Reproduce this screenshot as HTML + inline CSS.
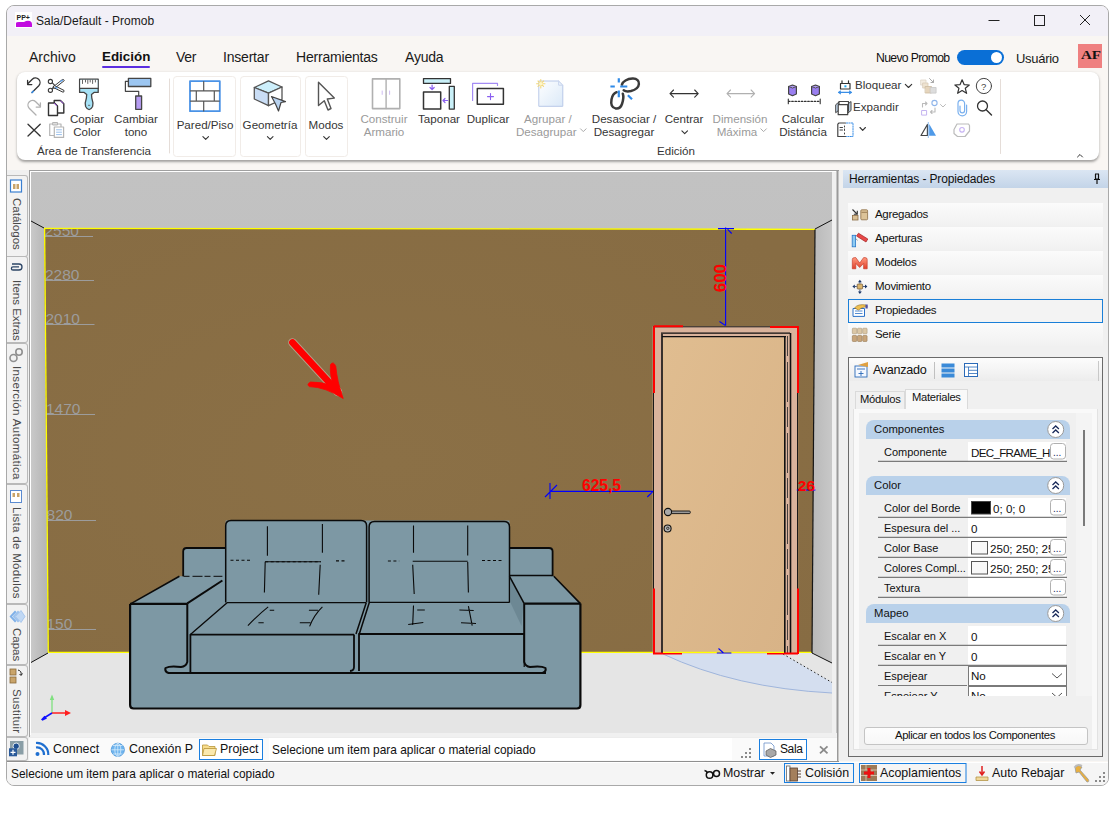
<!DOCTYPE html>
<html><head><meta charset="utf-8">
<style>
*{box-sizing:border-box;margin:0;padding:0}
html,body{width:1116px;height:830px;overflow:hidden;background:#fff;font-family:"Liberation Sans",sans-serif;color:#1a1a1a}
.a{position:absolute;white-space:nowrap}
#win{position:absolute;left:6px;top:5px;width:1103px;height:781px;border:1px solid #a9a9a9;border-radius:8px;background:#f9f6f3;overflow:hidden}
#title{position:absolute;left:0;top:0;width:1101px;height:30px;background:#f2f0f7}
.rl{font-size:11.6px;color:#363636;text-align:center;line-height:13px}
.dis{color:#9a9a9a}
.tabv{position:absolute;left:7px;width:21px;background:#f2f2f2;border:1px solid #b9b9b9;border-left:none;border-radius:0 3px 3px 0}
.vt{position:absolute;left:11px;writing-mode:vertical-rl;font-size:11.5px;color:#4a4a4a;line-height:12px}
.pi{position:absolute;left:848px;width:255px;height:23px;background:linear-gradient(#fbfbfb,#f1f1f1);font-size:11.5px;color:#111}
.pi span{position:absolute;left:27px;top:5px;letter-spacing:-0.3px}
.pg{font-size:11px;color:#111}
</style></head><body>
<div id="win">
  <div id="title"></div>
</div>
<!-- title bar -->
<svg class="a" style="left:15px;top:12px" width="18" height="16" viewBox="0 0 18 16">
  <rect x="0" y="0" width="17" height="16" fill="#fff"/>
  <text x="1.5" y="8" font-size="7" font-weight="bold" font-family="Liberation Sans" fill="#222">PP+</text>
  <path d="M1 11 Q1 10 4 10 L9 10 Q12 8 15 9 Q17 10 17 12 L17 15 L1 15 Z" fill="#c20ce0"/>
</svg>
<div class="a" style="left:36px;top:14px;font-size:12px;color:#1a1a1a">Sala/Default - Promob</div>
<!-- window controls -->
<svg class="a" style="left:980px;top:12px" width="120" height="16" viewBox="0 0 120 16">
  <line x1="8.5" y1="8.5" x2="19.5" y2="8.5" stroke="#222" stroke-width="1"/>
  <rect x="54.5" y="3.5" width="10" height="10" fill="none" stroke="#222" stroke-width="1"/>
  <path d="M100 3 L110 13 M110 3 L100 13" stroke="#222" stroke-width="1"/>
</svg>
<!-- menu -->
<div class="a" style="left:29px;top:49px;font-size:14px;color:#1a1a1a">Archivo</div>
<div class="a" style="left:102px;top:49px;font-size:13.4px;font-weight:bold;color:#111">Edición</div>
<div class="a" style="left:102px;top:66px;width:48px;height:2px;background:#5b2ee0;border-radius:1px"></div>
<div class="a" style="left:176px;top:49px;font-size:14px;letter-spacing:-0.3px">Ver</div>
<div class="a" style="left:223px;top:49px;font-size:14px;letter-spacing:-0.2px">Insertar</div>
<div class="a" style="left:296px;top:49px;font-size:14px;letter-spacing:-0.2px">Herramientas</div>
<div class="a" style="left:405px;top:49px;font-size:14px;letter-spacing:-0.2px">Ayuda</div>
<div class="a" style="left:876px;top:51px;font-size:12.2px;letter-spacing:-0.65px;color:#111">Nuevo Promob</div>
<div class="a" style="left:957px;top:50px;width:47px;height:15px;background:#0a6fd6;border-radius:8px"></div>
<div class="a" style="left:991px;top:52px;width:11px;height:11px;background:#fff;border-radius:50%"></div>
<div class="a" style="left:1016px;top:50.5px;font-size:13px;letter-spacing:-0.3px;color:#1a1a1a">Usuário</div>
<div class="a" style="left:1078px;top:44px;width:24px;height:24px;background:#ef8080"></div>
<div class="a" style="left:1080.5px;top:48px;font-family:'Liberation Serif',serif;font-weight:bold;font-size:12px;color:#111;transform:scaleX(1.25);transform-origin:0 0">AF</div>
<!-- ribbon panel -->
<div class="a" style="left:17px;top:72px;width:1082px;height:88px;background:#fff;border-radius:8px;box-shadow:0 1.5px 2.5px rgba(0,0,0,0.35)"></div>
<svg class="a" style="left:0;top:0" width="1116" height="170" viewBox="0 0 1116 170" fill="none" stroke-linecap="round" stroke-linejoin="round">
 <!-- undo -->
 <path d="M32 92.5 L38.8 85.7 A4.6 4.6 0 0 0 32.3 79.2 L28 83.5" stroke="#333" stroke-width="1.3"/>
 <path d="M27.6 80.4 V84.6 H31.8" stroke="#333" stroke-width="1.3"/>
 <path d="M32 92.5 L33.3 91.2" stroke="#3a8ee6" stroke-width="1.6"/>
 <!-- scissors -->
 <circle cx="50.4" cy="81.5" r="2.1" stroke="#3a3a3a" stroke-width="1.1" fill="#fff"/>
 <circle cx="50.4" cy="90.3" r="2.1" stroke="#3a3a3a" stroke-width="1.1" fill="#fff"/>
 <path d="M52.3 82.8 L55 85.6 M52.3 89 L55 86.3" stroke="#3a3a3a" stroke-width="1.1"/>
 <path d="M53 87 L62.3 79.6 Q63.8 79 64.3 80.6 L55 88 Z" stroke="#3a3a3a" stroke-width="1" fill="#fff"/>
 <path d="M54.5 85.6 L64 90.4 Q64.5 92 63 92.2 L53.5 87.6 Z" stroke="#3a3a3a" stroke-width="1" fill="#fff"/>
 <path d="M60.5 81.6 L62.5 80.3 M55.5 87.3 L57 88.1" stroke="#5aa0ee" stroke-width="1.2"/>
 <!-- redo -->
 <path d="M36 115 L29.2 108.2 A4.6 4.6 0 0 1 35.7 101.7 L40 106" stroke="#b0b0b0" stroke-width="1.3"/>
 <path d="M40.4 102.9 V107.1 H36.2" stroke="#b0b0b0" stroke-width="1.3"/>
 <!-- copy -->
 <path d="M54.2 113 V100.5 H60.5 L63.8 103.8 V113 Z" stroke="#333" stroke-width="1.4" fill="#fff"/>
 <path d="M48.5 103 H54.5 L57.5 106 V115.5 H48.5 Z" stroke="#333" stroke-width="1.4" fill="#fff"/>
 <path d="M54.5 103.3 L56.5 105.5 M60.6 100.8 L63 103.3" stroke="#9b4fe0" stroke-width="1"/>
 <!-- delete X -->
 <path d="M28 124.2 L40.2 136 M40.2 124.2 L28 136" stroke="#333" stroke-width="1.3"/>
 <!-- paste gray -->
 <path d="M49.7 124 H61 V135.5 H49.7 Z" stroke="#b5b5b5" stroke-width="1.2" fill="#fff"/>
 <rect x="53" y="122.5" width="4.5" height="2.5" stroke="#b5b5b5" stroke-width="1" fill="#ddd"/>
 <path d="M54.3 127 H63.6 V137.4 H54.3 Z" stroke="#b5b5b5" stroke-width="1.2" fill="#fff"/>
 <path d="M56.5 129.8 H61.5 M56.5 132.2 H61.5 M56.5 134.6 H61.5" stroke="#9ac0ec" stroke-width="1"/>
 <!-- brush -->
 <path d="M79.6 79.2 H98.2 V92.4 H94 L91.5 94.5 L91.8 98 Q93.6 103 92.6 106.5 Q91 109.6 89.1 109.6 Q87.2 109.6 85.6 106.5 Q84.6 103 86.4 98 L86.7 94.5 L84.2 92.4 H79.6 Z" fill="#a6e2f6" stroke="#454545" stroke-width="1.3"/>
 <path d="M80.3 79.9 H97.5 V88.2 H80.3 Z" fill="#fff"/>
 <path d="M79.6 88.3 H98.2" stroke="#454545" stroke-width="1.2"/>
 <path d="M82.5 80 V83.5 M85.5 80 V82 M87.8 80 V83.5 M90.2 80 V82 M92.6 80 V83.5 M95.4 80 V82" stroke="#555" stroke-width="0.9"/>
 <path d="M88.4 105.3 H89.8" stroke="#555" stroke-width="0.8"/>
 <!-- roller -->
 <rect x="128.4" y="78.4" width="22.4" height="8.1" fill="#9cc6f1" stroke="#454545" stroke-width="1.3"/>
 <path d="M128.4 81.3 H125.4 V91.3 H138.7 V96" stroke="#454545" stroke-width="1.2"/>
 <rect x="135.7" y="96" width="5.9" height="13.3" fill="#b69cf2" stroke="#454545" stroke-width="1.3"/>
 <!-- separator -->
 <path d="M169.5 79 V153" stroke="#e5ddd8" stroke-width="1"/>
 <!-- button boxes -->
 <rect x="173.5" y="76.5" width="62" height="80" rx="3" stroke="#f1ece8" stroke-width="1"/>
 <rect x="240.5" y="76.5" width="60" height="80" rx="3" stroke="#f1ece8" stroke-width="1"/>
 <rect x="305.5" y="76.5" width="42" height="80" rx="3" stroke="#f1ece8" stroke-width="1"/>
 <!-- brick -->
 <rect x="190" y="81.2" width="29.8" height="30" stroke="#4a92e6" stroke-width="1.8"/>
 <path d="M190.5 90.9 H219.3 M190.5 101.1 H219.3 M203.7 81.5 V90.9 M196.3 90.9 V101.1 M214.3 90.9 V101.1 M203.7 101.1 V111" stroke="#555" stroke-width="1.2"/>
 <!-- cube -->
 <path d="M268.5 80.8 L282 87 L268.5 93.2 L254.3 87.5 Z" fill="#cdeffb" stroke="#555" stroke-width="1.3"/>
 <path d="M254.3 87.5 L268.5 93.2 V105.7 L254.3 99 Z" fill="#c9ddf5" stroke="#555" stroke-width="1.3"/>
 <path d="M268.5 93.2 L282 87 V99.5 L268.5 105.7 Z" fill="#fff" stroke="#555" stroke-width="1.3"/>
 <path d="M271.5 96.5 L285.5 101.6 L281 102.5 L278.5 111 L275.5 104 Z" fill="#b9d3f0" stroke="#444" stroke-width="1.2"/>
 <!-- pointer -->
 <path d="M318.5 82.2 L334.3 98.1 L327.3 99 L331 108.5 L328 110 L324.3 100.7 L318.5 105.5 Z" fill="#fff" stroke="#555" stroke-width="1.4"/>
 <!-- wardrobe -->
 <rect x="372.5" y="78.9" width="27.3" height="29.7" stroke="#b0b0b0" stroke-width="1.6"/>
 <path d="M386.1 79 V108.6" stroke="#b0b0b0" stroke-width="1.4"/>
 <path d="M382.2 91 V94.4 M389.6 91 V94.4" stroke="#c8b4f0" stroke-width="0.9"/>
 <!-- taponar -->
 <rect x="423.5" y="78.6" width="27" height="4.8" fill="#c9f0f8" stroke="#333" stroke-width="1.3"/>
 <path d="M432.1 85 V89.3 M430 87.5 L432.1 89.5 L434.2 87.5" stroke="#8a5ff0" stroke-width="1.2"/>
 <rect x="423.5" y="92.1" width="17.2" height="17" fill="#fff" stroke="#333" stroke-width="1.5"/>
 <rect x="449.3" y="86.4" width="5" height="22.7" fill="#c9f0f8" stroke="#333" stroke-width="1.3"/>
 <path d="M447.6 100.5 H443 M445 98.5 L443 100.5 L445 102.5" stroke="#8a5ff0" stroke-width="1.2"/>
 <!-- duplicar -->
 <path d="M472.6 100.5 V83.4 H497.5 V85.5" stroke="#a48cf4" stroke-width="1.2"/>
 <rect x="477.3" y="88.6" width="26.1" height="15.7" fill="#fff" stroke="#333" stroke-width="1.5"/>
 <path d="M490.5 93.6 V99.6 M487.5 96.6 H493.5" stroke="#8a5ff0" stroke-width="1.1"/>
 <!-- agrupar (disabled doc) -->
 <defs><linearGradient id="dg" x1="0" y1="0" x2="1" y2="1"><stop offset="0" stop-color="#fdfeff"/><stop offset="1" stop-color="#dbe9f8"/></linearGradient></defs>
 <path d="M539.2 81 H558.6 L562.8 85.2 V106.3 H539.2 Z" fill="url(#dg)" stroke="#b8c8e8" stroke-width="1"/>
 <path d="M558.6 81 V85.2 H562.8" stroke="#c9d6ee" stroke-width="1"/>
 <path d="M540.8 79.5 V88 M536.6 83.7 H545 M538 81 L543.6 86.4 M543.6 81 L538 86.4" stroke="#f2d77a" stroke-width="1.1"/>
 <circle cx="540.8" cy="83.7" r="1.8" fill="#fff6c8"/>
 <!-- desasociar -->
 <path d="M621.9 84.6 C622.8 81.5 627 78.8 632.6 78.6 C637 78.4 639.3 81 638.9 84 C638.6 87.6 636.5 89.6 631 91 C627.5 91.8 625 91.2 623.7 90.2" stroke="#3a3a3a" stroke-width="2.5"/>
 <path d="M616.6 92.2 C613.5 93.5 612 96.5 611.5 99.5 C610.8 103.5 611.5 107.5 615.5 108.4 C619 109 621 107 622 104 C623.2 100.5 623.8 96.5 622.8 93.7" stroke="#3a3a3a" stroke-width="2.5"/>
 <path d="M618.8 78.2 V82.6 M618.8 90.4 V97.3 M610.4 86.5 H614.8 M620.2 86.5 H627.3 M627.9 95.3 L632 99.3" stroke="#2f8ae8" stroke-width="2.2" stroke-linecap="butt"/>
 <!-- centrar -->
 <path d="M670 93.6 H698.2 M673.5 90 L670 93.6 L673.5 97.2 M694.7 90 L698.2 93.6 L694.7 97.2" stroke="#333" stroke-width="1.1"/>
 <!-- dimension disabled -->
 <path d="M727 93.6 H754.6 M730.5 90 L727 93.6 L730.5 97.2 M751.1 90 L754.6 93.6 L751.1 97.2" stroke="#b0b0b0" stroke-width="1.1"/>
 <!-- calcular -->
 <path d="M788.6 86.5 L792.5 85 L796.4 86.5 V94 L792.5 95.7 L788.6 94 Z" fill="#9a7ff0" stroke="#444" stroke-width="1.2"/>
 <path d="M788.6 86.5 L792.5 88 L796.4 86.5" stroke="#444" stroke-width="0.9" fill="#c9b8f8"/>
 <path d="M811.6 86.5 L815.5 85 L819.4 86.5 V94 L815.5 95.7 L811.6 94 Z" fill="#9a7ff0" stroke="#444" stroke-width="1.2"/>
 <path d="M811.6 86.5 L815.5 88 L819.4 86.5" stroke="#444" stroke-width="0.9" fill="#c9b8f8"/>
 <path d="M788.5 101.4 H820" stroke="#333" stroke-width="1.1" stroke-dasharray="1.6 1.6"/>
 <path d="M788.3 99 V103.8 M820.2 99 V103.8" stroke="#333" stroke-width="1.1"/>
 <!-- bloquear -->
 <path d="M840.5 83.5 H850 V89 H840.5 Z M842 83.5 V80.8 M848.5 83.5 V80.8" stroke="#333" stroke-width="1.2"/>
 <rect x="844.4" y="85.3" width="2" height="2" fill="#1fa8f0"/>
 <path d="M838.5 92.4 H851.5 M840.5 91 L838.5 92.4 L840.5 93.8 M849.5 91 L851.5 92.4 L849.5 93.8" stroke="#3a8ee6" stroke-width="1.1"/>
 <path d="M905.3 84.3 L908.5 87.5 L911.7 84.3" stroke="#333" stroke-width="1.1"/>
 <!-- expandir -->
 <path d="M836 104.5 L839 102 V110 L836 112.5 Z M848 104 L851 101.5 V110.5 L848 113 Z" fill="#c4d9ee" stroke="#444" stroke-width="1"/>
 <rect x="839" y="101.5" width="9.5" height="9.5" fill="#fff" stroke="#444" stroke-width="1.2"/>
 <rect x="838.2" y="104.7" width="9.5" height="10" fill="#fff" stroke="#444" stroke-width="1.2"/>
 <!-- row3 icon -->
 <path d="M845.5 123 H839 L837.8 124.2 V136.5 H845.5" stroke="#444" stroke-width="1.2"/>
 <path d="M840 127.5 H842.5 M840 130 H842.5 M844.5 126 V127 M844.5 129 V130.5 M844.5 133 V134" stroke="#444" stroke-width="1"/>
 <path d="M846.5 123 H853 V136.5 H846.5" stroke="#3a8ee6" stroke-width="1" stroke-dasharray="1.2 1.2"/>
 <path d="M860 127.5 L862.7 130.3 L865.4 127.5" stroke="#333" stroke-width="1.1"/>
 <!-- col2 disabled icons -->
 <rect x="921" y="80" width="5" height="5" fill="#f4ede2" stroke="#ddd4c6" stroke-width="0.8"/>
 <rect x="923" y="83" width="5" height="5" fill="#eee3d0" stroke="#d9ccb6" stroke-width="0.8"/>
 <rect x="925.5" y="86.5" width="6" height="6.5" fill="#e6d5bc" stroke="#cdbb9f" stroke-width="0.8"/>
 <rect x="930.5" y="87.5" width="5.6" height="5.6" fill="#ddd" stroke="#c8c8c8" stroke-width="0.8"/>
 <path d="M929.5 78.5 L933.5 82.5 M933.5 80 V82.5 H931" stroke="#aaa" stroke-width="1"/>
 <path d="M922.5 107 V103.5 H927 M925.5 102 L927 103.5 L925.5 105" stroke="#bbb" stroke-width="1.1"/>
 <circle cx="934.5" cy="103" r="2.6" stroke="#8fb5ea" stroke-width="1.1"/>
 <rect x="922" y="110.5" width="4.6" height="4.6" stroke="#c4b4f0" stroke-width="1"/>
 <path d="M935 108 V112 H930.5 M932 110.5 L930.5 112 L932 113.5" stroke="#bbb" stroke-width="1.1"/>
 <path d="M940.5 104.5 L943 107 L945.5 104.5" stroke="#bbb" stroke-width="1"/>
 <path d="M921 135.5 L927.4 124.5 V135.5 Z" stroke="#444" stroke-width="1.2"/>
 <path d="M929.2 124 L936 135.8 H929.2 Z" fill="#4f9ae8"/>
 <path d="M928.3 122.5 V137.5" stroke="#6aa8ee" stroke-width="0.8" stroke-dasharray="1 1"/>
 <!-- star -->
 <path d="M962.1 79.8 L964.1 84.6 L969.3 85 L965.3 88.3 L966.6 93.3 L962.1 90.6 L957.6 93.3 L958.9 88.3 L954.9 85 L960.1 84.6 Z" stroke="#333" stroke-width="1.2"/>
 <!-- help -->
 <circle cx="983.9" cy="86" r="7.6" stroke="#444" stroke-width="1"/>
 <text x="981" y="89.8" font-size="9.5" font-family="Liberation Sans" fill="#444" stroke="none">?</text>
 <!-- paperclip -->
 <path d="M960 106 V110.5 A2.3 2.3 0 0 0 964.6 110.5 V103.5 A3.3 3.3 0 0 0 958 103.5 V111.5 A4.3 4.3 0 0 0 966.6 111.5 V105" stroke="#7ab0ee" stroke-width="1.2"/>
 <!-- magnifier -->
 <circle cx="982.5" cy="106" r="5" stroke="#333" stroke-width="1.3"/>
 <path d="M986.2 109.7 L991.5 115" stroke="#333" stroke-width="1.4"/>
 <!-- shape -->
 <path d="M957 124 H968.5 L969.5 125.5 V131 L965 136.5 H957.5 L954 133.5 V129.5 Z" stroke="#bbb" stroke-width="1.2"/>
 <circle cx="962" cy="129.8" r="2.3" stroke="#c7b3f3" stroke-width="1.1"/>
 <!-- separator 2 -->
 <path d="M1000.5 79.5 V153.5" stroke="#e5ddd8" stroke-width="1"/>
 <!-- chevrons under buttons -->
 <path d="M202.9 136.6 L205.7 139.4 L208.5 136.6" stroke="#333" stroke-width="1.1"/>
 <path d="M267.4 136.6 L270.2 139.4 L273 136.6" stroke="#333" stroke-width="1.1"/>
 <path d="M323.7 136.6 L326.5 139.4 L329.3 136.6" stroke="#333" stroke-width="1.1"/>
 <path d="M681.9 130.8 L684.7 133.6 L687.5 130.8" stroke="#333" stroke-width="1.1"/>
 <path d="M580.5 128.8 L583.3 131.6 L586.1 128.8" stroke="#aaa" stroke-width="1"/>
 <path d="M760.8 128.8 L763.6 131.6 L766.4 128.8" stroke="#aaa" stroke-width="1"/>
 <path d="M1077.5 157 L1080 154.5 L1082.5 157" stroke="#333" stroke-width="1"/>
</svg>
<div class="a rl" style="left:37px;top:112px;width:100px">Copiar<br>Color</div>
<div class="a rl" style="left:86px;top:112px;width:100px">Cambiar<br>tono</div>
<div class="a rl" style="left:37px;top:144px;width:100px">Área de Transferencia</div>
<div class="a rl" style="left:155px;top:118px;width:100px">Pared/Piso</div>
<div class="a rl" style="left:220px;top:118px;width:100px">Geometría</div>
<div class="a rl" style="left:276px;top:118px;width:100px">Modos</div>
<div class="a rl dis" style="left:334px;top:112px;width:100px">Construir<br>Armario</div>
<div class="a rl" style="left:389px;top:112px;width:100px">Taponar</div>
<div class="a rl" style="left:438px;top:112px;width:100px">Duplicar</div>
<div class="a rl dis" style="left:495px;top:112px;width:100px;text-align:left;padding-left:29px">Agrupar /<br><span style="margin-left:-8px">Desagrupar</span></div>
<div class="a rl" style="left:574px;top:112px;width:100px">Desasociar /<br>Desagregar</div>
<div class="a rl" style="left:634px;top:112px;width:100px">Centrar</div>
<div class="a rl dis" style="left:690px;top:112px;width:100px">Dimensión<br><span style="margin-left:-6px">Máxima</span></div>
<div class="a rl" style="left:753px;top:112px;width:100px">Calcular<br>Distáncia</div>
<div class="a rl" style="left:626px;top:144px;width:100px">Edición</div>
<div class="a rl" style="left:855px;top:78px;text-align:left">Bloquear</div>
<div class="a rl" style="left:853px;top:100px;text-align:left">Expandir</div>


<!-- left vertical tabs -->
<div class="a" style="left:7px;top:170px;width:22px;height:591px;background:#f0f0f0"></div>
<div class="tabv" style="top:174.5px;height:82px"></div>
<div class="tabv" style="top:256px;height:87px"></div>
<div class="tabv" style="top:343px;height:141px"></div>
<div class="tabv" style="top:484px;height:120px"></div>
<div class="tabv" style="top:604px;height:61px"></div>
<div class="tabv" style="top:665px;height:72px"></div>
<div class="tabv" style="top:737px;height:24px"></div>
<div class="vt" style="top:198px">Catálogos</div>
<div class="vt" style="top:280px">Itens Extras</div>
<div class="vt" style="top:366px;letter-spacing:0.35px">Inserción Automática</div>
<div class="vt" style="top:507px;letter-spacing:0.3px">Lista de Módulos</div>
<div class="vt" style="top:628px">Capas</div>
<div class="vt" style="top:689px;letter-spacing:0.33px">Sustituir</div>
<svg class="a" style="left:0;top:160px" width="30" height="610" viewBox="0 160 30 610" fill="none">
 <!-- catalogos icon -->
 <rect x="10.5" y="180" width="11" height="12" fill="#fff" stroke="#3a7fd0" stroke-width="1.2"/>
 <rect x="13" y="184" width="2.5" height="5" fill="#c9a46a"/><rect x="16.5" y="184" width="2.5" height="5" fill="#c9a46a"/>
 <!-- clip -->
 <path d="M12 264 H19 A3 3 0 0 1 19 270 H13 A1.6 1.6 0 0 1 13 266.8 H19" stroke="#2c4566" stroke-width="1.3"/>
 <!-- insercion gears -->
 <circle cx="13.5" cy="358" r="3.5" stroke="#909090" stroke-width="1.6"/>
 <circle cx="19" cy="352" r="3.2" stroke="#909090" stroke-width="1.6"/>
 <!-- lista icon -->
 <rect x="10.5" y="490.5" width="11" height="12" fill="#fff" stroke="#5a8ad0" stroke-width="1"/>
 <rect x="12.5" y="493" width="2.5" height="4" fill="#c9a46a"/><rect x="17" y="493" width="2.5" height="4" fill="#c9a46a"/>
 <!-- capas -->
 <path d="M9.5 616.5 L15 610.5 L16.5 612 L12 616.5 L16.5 621 L15 622.5 Z" fill="#7fb0e8"/>
 <path d="M12.5 616.5 L18 610.5 L19.5 612 L15 616.5 L19.5 621 L18 622.5 Z" fill="#9cc2ee"/>
 <path d="M15.5 616.5 L21 610.5 L25 616.5 L21 622.5 Z" fill="#c0d8f4" stroke="#8ab4e8" stroke-width="0.6"/>
 <!-- sustituir -->
 <rect x="10" y="669" width="6" height="6" fill="#c9a46a" stroke="#8a6a3a" stroke-width="0.8"/>
 <rect x="10" y="677" width="6" height="6" fill="#c9a46a" stroke="#8a6a3a" stroke-width="0.8"/>
 <path d="M18 670 Q22 671 21 675 M19.5 674 L21 675.5 L22.5 673.5" stroke="#222" stroke-width="1"/>
 <!-- bottom icon -->
 <rect x="10" y="741" width="13.5" height="13.5" fill="#8a9ea6"/>
 <circle cx="16.2" cy="746.2" r="3.2" fill="#1f4f8f" stroke="#dfe8ee" stroke-width="1"/>
 <rect x="9" y="748.3" width="8" height="8" fill="#2a5a9a"/>
 <path d="M13 749.8 V754.8 M10.5 752.3 H15.5" stroke="#fff" stroke-width="1.2"/>
</svg>


<!-- viewport -->
<svg class="a" style="left:0;top:0" width="1116" height="830" viewBox="0 0 1116 830" font-family="Liberation Sans">
 <defs>
  <linearGradient id="lw" x1="0" y1="0" x2="1" y2="0"><stop offset="0" stop-color="#c9c9c9"/><stop offset="1" stop-color="#b3b3b3"/></linearGradient>
  <linearGradient id="rw" x1="0" y1="0" x2="1" y2="0"><stop offset="0" stop-color="#b8b8b8"/><stop offset="1" stop-color="#c8c8c8"/></linearGradient>
  <radialGradient id="bw" cx="0.45" cy="0.55" r="0.7"><stop offset="0" stop-color="#8b7046"/><stop offset="1" stop-color="#876c43"/></radialGradient>
  <linearGradient id="door" x1="0" y1="0" x2="1" y2="1"><stop offset="0" stop-color="#e0bd90"/><stop offset="1" stop-color="#d8b387"/></linearGradient>
  <linearGradient id="ceil" x1="0" y1="0" x2="0" y2="1"><stop offset="0" stop-color="#c2c2c2"/><stop offset="1" stop-color="#bababa"/></linearGradient>
  <clipPath id="vp"><rect x="31" y="172" width="801" height="561"/></clipPath>
  <clipPath id="wallclip"><path d="M44 228.5 L815 229 L812 653 L48 653 Z"/></clipPath>
 </defs>
 <!-- frame -->
 <rect x="29" y="170" width="810" height="567" fill="#f0f0f0"/>
 <path d="M29.5 170 V761 M29 170.5 H839" stroke="#a0a0a0" stroke-width="1"/>
 <path d="M30.5 171 V735 M30 171.5 H836" stroke="#ffffff" stroke-width="1"/>
 <path d="M837.5 170 V761" stroke="#9a9a9a" stroke-width="2"/>
 <g clip-path="url(#vp)">
  <rect x="31" y="172" width="801" height="561" fill="url(#ceil)"/>
  <path d="M31 662.5 L48 653 L812 653 L832 663 L832 733 L31 733 Z" fill="#e5e5e5"/>
  <path d="M31 221 L44 228.5 L48 653 L31 662.5 Z" fill="url(#lw)"/>
  <path d="M815 229 L832 220 L832 663 L812 653 Z" fill="url(#rw)"/>
  <path d="M44 228.5 L815 229 L812 653 L48 653 Z" fill="url(#bw)"/>
  <!-- wall labels -->
  <g clip-path="url(#wallclip)" fill="#9c9c9c" font-size="15.5">
   <text x="44.5" y="236">2550</text>
   <text x="45" y="280">2280</text>
   <text x="45.5" y="324">2010</text>
   <text x="46" y="414">1470</text>
   <text x="38" y="520">1820</text>
   <text x="39" y="629">1150</text>
  </g>
  <path d="M44 236.5 H93 M45 280.5 H94 M45.5 324.5 H94.5 M46.5 414.5 H95 M47.3 520.5 H96 M48 629.5 H96" stroke="#9c9c9c" stroke-width="1"/>
  <!-- edges -->
  <path d="M44 228.3 L815 229.3" stroke="#ffff00" stroke-width="1.3"/>
  <path d="M44.6 228.5 L48.3 652.5" stroke="#ffff00" stroke-width="1.3"/>
  <path d="M48 652.4 L812 652.4" stroke="#ffff00" stroke-width="1.3"/>
  <path d="M815 229.5 L812 653" stroke="#151515" stroke-width="1.2"/>
  <path d="M31 221 L44 228" stroke="#111" stroke-width="1"/>
  <path d="M31 662.5 L48 653" stroke="#111" stroke-width="1"/>
  <path d="M815 229 L832 220" stroke="#111" stroke-width="1"/>
  <path d="M812 653 L832 663" stroke="#111" stroke-width="1"/>
  <!-- door swing -->
  <path d="M663 654 Q735 688 832 693 L832 682.5 L783 654 Z" fill="#d4deef"/>
  <path d="M663 654 Q735 688 832 693" stroke="#9fb5dc" stroke-width="1" fill="none"/>
  <path d="M783 654 L832 682.5" stroke="#222" stroke-width="1" stroke-dasharray="1.5 2.5"/>
  <!-- door -->
  <rect x="652.7" y="326.3" width="145.4" height="327.2" fill="#dab39c"/>
  <rect x="663" y="337.5" width="121.4" height="315.5" fill="url(#door)"/>
  <path d="M653.5 326.5 V653.5 M797.5 326.5 V653.5 M653 326.8 H798" stroke="#1a1a1a" stroke-width="1"/>
  <path d="M661 333.2 H790 M662 336.6 H786" stroke="#111" stroke-width="1.3"/>
  <path d="M662 334 V653 M784.8 336 V653 M790.5 333 V653" stroke="#111" stroke-width="1.6"/>
  <path d="M787.5 336 V653" stroke="#222" stroke-width="0.8" stroke-dasharray="20 6 40 5"/>
  <path d="M653.8 326.3 H683 M654 326.3 V393 M770 327 H799 M798 326.3 V393 M654 588.6 V653.8 M653 653.5 H682 M767 653.5 H798 M798 588.6 V654" stroke="#ff0000" stroke-width="2"/>
  <path d="M663 652.4 H784" stroke="#ffff00" stroke-width="1.3"/>
  <!-- handle -->
  <rect x="670.5" y="511" width="19.8" height="2.6" rx="1" fill="#9a9a9a" stroke="#111" stroke-width="0.9"/>
  <circle cx="668" cy="512" r="3.6" fill="#a9a9a9" stroke="#111" stroke-width="1.1"/>
  <circle cx="667.6" cy="528.5" r="3.5" fill="#b5b5b5" stroke="#111" stroke-width="1.1"/>
  <circle cx="667.8" cy="528.3" r="1.2" fill="none" stroke="#111" stroke-width="0.8"/>
  <!-- dimensions -->
  <g stroke="#0000ff" stroke-width="1.1" fill="none">
   <path d="M725.6 227.5 V325.6 M718 228.6 H734 M727.6 229.4 L731.7 233.5 M719.5 321.5 L725.6 325.6"/>
   <path d="M550 491.4 H653 M550 483 V499 M545 497 L557 485 M647.3 497 L653 491.4"/>
   <path d="M796.8 490 H815.4"/>
   <path d="M716.8 653 H731.4 M718.5 648.5 L723.5 653"/>
  </g>
  <g fill="#ff0000" font-weight="bold" font-size="15.6">
   <text x="582" y="490.6">625,5</text>
   <text x="797.8" y="490.5" font-size="15.5">26</text>
   <text transform="translate(726.3 292.3) rotate(-90)" font-size="17">600</text>
  </g>
  <!-- red arrow -->
  <path d="M292.5 342.5 L338 392" stroke="#fff" stroke-width="8.6" stroke-linecap="round" opacity="0.35"/>
  <path d="M292.5 342.5 L338 392" stroke="#ff0000" stroke-width="6.8" stroke-linecap="round"/>
  <path d="M309.5 386.6 Q325 387 343.2 398.5 Q337 381 335.8 366.5 Q333.5 360.5 330.5 364.5 Q329.5 374 333.5 386 Q321 381.5 310.5 382 Q306 384.5 309.5 386.6 Z" fill="#ff0000" stroke="#ff0000" stroke-width="0.8" stroke-linejoin="round"/>
  <!-- axes -->
  <path d="M52 713 V698" stroke="#7fe07f" stroke-width="1.3"/>
  <path d="M49.8 700 L52 694.5 L54.2 700 Z" fill="#7fe07f"/>
  <path d="M52 713 H66" stroke="#ff2020" stroke-width="1.5"/>
  <path d="M65 710 L71 713 L65 716 Z" fill="#ff2020"/>
  <path d="M52 713 L44 718" stroke="#1010ff" stroke-width="1.5"/>
  <path d="M41 719.5 L44.5 715.8 L47 718.5 L42.5 720.8 Z" fill="#1010ff"/>
  <!-- SOFA -->
  <path d="M130.1 604.1 L179.4 576.3 H183.2 V548 H225.7 V520.6 H509.5 V548 H552.6 V576.3 H553.8 L580.4 603.6 V708.5 H130.1 Z" fill="#7d98a4"/>
  <g stroke="#0a0a0a" stroke-linejoin="round" fill="none">
   <!-- arm backs -->
   <path d="M183.2 576.3 V551.5 Q183.2 548 186.7 548 H226" stroke-width="1.8"/>
   <path d="M183.5 576.3 H222.4" stroke-width="1" stroke-dasharray="6 3 10 2"/>
   <path d="M509.5 548 H549 Q552.6 548 552.6 551.5 V576.3" stroke-width="1.8"/>
   <path d="M510 575.5 H552" stroke-width="1.5"/>
   <!-- back cushions -->
   <path d="M225.7 602.5 V526 Q225.7 520.6 231 520.6 H361 Q366.6 520.6 366.6 526 V602.2" stroke-width="1.5"/>
   <path d="M369.1 602.4 V527 Q369.1 521.4 374.5 521.4 H504 Q509.5 521.4 509.5 527 V602.4" stroke-width="1.5"/>
   <!-- arm inner faces -->
   <path d="M510.4 576.5 L523.5 602.5 L521.5 626 L510.4 602.4 Z" fill="#6d8894" stroke="none"/>
   <path d="M509.5 576.3 L524.2 603.6" stroke-width="1.5"/>
   <path d="M187.3 603.3 L222.4 580.5" stroke-width="2"/>
   <!-- seat tops -->
   <path d="M190.4 634.6 L227.1 602.7 H366 M369 602.4 H509.5" stroke-width="1.3"/>
   <path d="M366.3 602.5 L356 634 M369.3 602.5 L359.3 634" stroke-width="1.5"/>
   <!-- arm tops -->
   <path d="M130.1 604.1 L179.4 576.3 M553.8 576.3 L580.4 603.6" stroke-width="1.6"/>
   <path d="M130.1 603.8 H187.3 M524.2 603.6 H580.4" stroke-width="2.2"/>
   <!-- silhouette -->
   <path d="M130.1 604.1 V705 Q130.1 708.5 133.6 708.5 H577 Q580.4 708.5 580.4 705 V603.6" stroke-width="2.2"/>
   <path d="M187.3 603.3 V662 Q186 666.5 181 667 Q170 665.5 165.5 668 Q164.5 671.5 168.5 673 H546" stroke-width="2"/>
   <path d="M524.2 603.6 V662 Q525.5 666.5 530 667 Q541 665.5 545.5 668 Q546.5 671.5 542.5 673" stroke-width="2"/>
   <!-- seat fronts -->
   <path d="M190.4 672 V634.6 H354 M354 634.6 V667 Q354 670.6 350 671" stroke-width="1.8"/>
   <path d="M359 671 V634 H524.7" stroke-width="1.8"/>
   <path d="M524.2 634.6 V667" stroke-width="1.2"/>
  </g>
  <g stroke="#0a0a0a" fill="none" stroke-width="1.1">
   <path d="M267.4 526.3 V555.7 M265.2 561.7 L264.4 592.6 M322.4 524 V552.7 M320.2 564.7 L318.7 594.8"/>
   <path d="M230.5 560.2 H251.6 M265.2 561.7 H320.9 M336 560.9 H346.5" stroke-dasharray="3 2.5"/>
   <path d="M265.2 561.7 H320.9" />
   <path d="M268.2 606.9 Q258 615 247.9 625.7 M269.7 610.2 H274.2 M258.4 622.7 H263.7 M322.4 606.9 Q314 615 309.6 626.4 M308.9 610.2 H317.9 M299.8 622.7 H310.4"/>
   <path d="M413.5 525.5 V552.7 M412.7 564.7 L414.2 594 M467.7 525.5 V555.5 M467.7 562 L468.4 592.6"/>
   <path d="M387.9 561 H399.2 M482 560.5 H503" stroke-dasharray="3 2.5"/>
   <path d="M412.7 561.3 H467.7"/>
   <path d="M413.5 605.4 L412.7 625 M417.2 610 H424.8 M408.2 624.5 L423.3 622.5 M468.4 606.1 L472.2 625.7 M459.4 610 L473.7 610.5 M461 622.7 L476 623.5"/>
  </g>
 </g>
</svg>


<!-- right panel -->
<div class="a" style="left:839px;top:170px;width:269px;height:591px;background:#f0f0f0"></div>
<div class="a" style="left:843px;top:170px;width:265px;height:18px;background:linear-gradient(#dbe6f3,#c3d4e8)"></div>
<div class="a" style="left:849px;top:172px;font-size:12px;letter-spacing:-0.15px;color:#111">Herramientas - Propiedades</div>
<svg class="a" style="left:1092px;top:173px" width="10" height="12" viewBox="0 0 10 12"><path d="M3 1 H7 M3.5 1 V6 H6.5 V1 M2 6.5 H8 M5 6.5 V11" stroke="#111" stroke-width="1.2" fill="none"/></svg>
<div class="pi" style="top:203px"><span>Agregados</span></div>
<div class="pi" style="top:227px"><span>Aperturas</span></div>
<div class="pi" style="top:251px"><span>Modelos</span></div>
<div class="pi" style="top:275px"><span>Movimiento</span></div>
<div class="pi" style="top:299px;height:24px;border:1px solid #1a7fd8;background:#f3f3f3"><span style="left:26px;top:4px">Propiedades</span></div>
<div class="pi" style="top:323px"><span>Serie</span></div>
<svg class="a" style="left:845px;top:200px" width="30" height="150" viewBox="845 200 30 150" fill="none">
 <defs><linearGradient id="mg" x1="0" y1="0" x2="0" y2="1"><stop offset="0" stop-color="#ff9a80"/><stop offset="1" stop-color="#e0402a"/></linearGradient></defs>
 <path d="M852.5 209.5 L857 214 M857.3 210.8 V214.3 H853.8" stroke="#333" stroke-width="1.1"/>
 <rect x="852.5" y="215.5" width="5.5" height="4.5" fill="#d9bf94" stroke="#8a6c44" stroke-width="0.8"/>
 <rect x="860.8" y="209.8" width="6.8" height="10" rx="1" fill="#dcc398" stroke="#8a6c44" stroke-width="0.8"/>
 <path d="M861.5 212.3 H867" stroke="#8a6c44" stroke-width="0.8"/>
 <rect x="852.2" y="235.3" width="3.4" height="11.5" fill="#8ecbf2" stroke="#2a78c8" stroke-width="0.8"/>
 <path d="M856.5 236 L858.5 233.2 L867.8 239 L866 242 Z" fill="#e84848" stroke="#a02020" stroke-width="0.7"/>
 <path d="M855.8 238.5 L857.5 240.5" stroke="#777" stroke-width="0.7"/>
 <path d="M852.3 268.8 V259.5 Q852.3 257.6 854.5 257.6 H855.8 L859.7 263 L863.6 257.6 H865 Q867.2 257.6 867.2 259.5 V268.8 H863.6 V263.5 L859.7 267.5 L855.8 263.5 V268.8 Z" fill="url(#mg)" stroke="#c03020" stroke-width="0.6"/>
 <g fill="#1a3566">
  <path d="M852.4 286.5 L854.8 284.6 V288.4 Z"/><path d="M867.4 286.5 L865 284.6 V288.4 Z"/>
  <path d="M859.9 279.8 L858 282.2 H861.8 Z"/><path d="M859.9 294 L858 291.6 H861.8 Z"/>
 </g>
 <path d="M854.5 286.5 H856.8 M863 286.5 H865.5 M859.9 282 V283.6 M859.9 289.5 V292" stroke="#1a3566" stroke-width="0.8"/>
 <rect x="857.2" y="284" width="5.4" height="5" rx="0.8" fill="#dbb56c" stroke="#6a5030" stroke-width="0.7"/>
 <path d="M853 308.5 H864.5 V316.4 H853 Z" fill="#fff" stroke="#2a70c8" stroke-width="1"/>
 <path d="M855 311 H862.5 M855 313.5 H862.5" stroke="#2a70c8" stroke-width="0.8"/>
 <path d="M854.5 308 Q858 303.5 866 305 L867.3 306.3 Q862 307 858.5 310 Z" fill="#f0c050" stroke="#8a6a20" stroke-width="0.6"/>
 <rect x="865.5" y="304.5" width="2.2" height="4" fill="#5050a0"/>
 <g fill="#dbc7a6" stroke="#a08a68" stroke-width="0.5">
  <rect x="852.3" y="328.2" width="4.4" height="5.6" rx="0.8"/><rect x="857.5" y="328.2" width="4.4" height="5.6" rx="0.8"/><rect x="862.7" y="328.2" width="4.4" height="5.6" rx="0.8"/>
 </g>
 <g fill="#c7a47a" stroke="#8a6c44" stroke-width="0.5">
  <rect x="852.3" y="335.5" width="4.4" height="6" rx="0.8"/><rect x="857.5" y="335.5" width="4.4" height="6" rx="0.8"/><rect x="862.7" y="335.5" width="4.4" height="6" rx="0.8"/>
 </g>
</svg>
<!-- advanced box -->
<div class="a" style="left:848px;top:357px;width:255px;height:400px;border:1px solid #6a6a6a;background:#f0f0f0"></div>
<div class="a" style="left:849px;top:358px;width:253px;height:23px;background:linear-gradient(#fcfcfc,#f3f3f3 60%,#ececec)"></div>
<div class="a" style="left:1097.5px;top:361px;width:1px;height:20px;background:#c8c8c8"></div>
<svg class="a" style="left:850px;top:358px" width="135" height="25" viewBox="850 358 135 25" fill="none">
 <rect x="855" y="366" width="12" height="11" fill="#f4f8ff" stroke="#2a6ab8" stroke-width="0.9"/>
 <path d="M857 369 H865 M861 371 V376 M858.5 373.5 H863.5" stroke="#2a6ab8" stroke-width="0.9"/>
 <path d="M858 365 L868 362 L868 367 Z" fill="#e0a040"/>
 <path d="M934.5 362 V379" stroke="#c0c0c0" stroke-width="1"/>
 <rect x="941.5" y="363.5" width="13" height="4" fill="#3a8ad8"/><rect x="941.5" y="368.5" width="13" height="4" fill="#3a8ad8"/><rect x="941.5" y="373.5" width="13" height="4" fill="#3a8ad8"/>
 <rect x="964.5" y="363.5" width="13" height="13" fill="#fff" stroke="#2a6ab8" stroke-width="1"/>
 <path d="M964.5 367 H977.5 M968.5 367 V376.5 M968.5 370.3 H977.5 M968.5 373.5 H977.5" stroke="#2a6ab8" stroke-width="0.8"/>
</svg>
<div class="a" style="left:873px;top:363px;font-size:12.6px;letter-spacing:-0.3px;color:#111">Avanzado</div>
<!-- tabs -->
<div class="a" style="left:854.5px;top:390.5px;width:50.5px;height:18px;background:#f0f0f0;border:1px solid #dadada;border-bottom:none"></div>
<div class="a" style="left:860px;top:393px;font-size:11.2px;letter-spacing:-0.25px;color:#111">Módulos</div>
<div class="a" style="left:904.5px;top:388.5px;width:63px;height:21px;background:#f9f9f9;border:1px solid #dadada;border-bottom:none"></div>
<div class="a" style="left:912px;top:391px;font-size:11.2px;letter-spacing:-0.3px;color:#111">Materiales</div>
<div class="a" style="left:852.5px;top:408.5px;width:245px;height:341px;background:#f9f9f9;border:1px solid #e2e2e2;border-top:none"></div>
<div class="a" style="left:859px;top:413px;width:233px;height:336px;background:#f0f0f0"></div>
<!-- scroll track -->
<div class="a" style="left:1076px;top:413px;width:16px;height:282.5px;background:#f4f4f4"></div>
<div class="a" style="left:1082.5px;top:430px;width:2px;height:96px;background:#7a7a7a"></div>
<!-- categories -->
<div class="a" style="left:865.5px;top:419.5px;width:204px;height:19.5px;background:#b9d1ea;border-radius:8px 8px 0 0"></div>
<div class="a" style="left:865.5px;top:476px;width:204px;height:19px;background:#b9d1ea;border-radius:8px 8px 0 0"></div>
<div class="a" style="left:865.5px;top:604px;width:204px;height:19.3px;background:#b9d1ea;border-radius:8px 8px 0 0"></div>
<div class="a pg" style="left:874px;top:423px;font-size:11.3px">Componentes</div>
<div class="a pg" style="left:874px;top:479px;font-size:11.3px">Color</div>
<div class="a pg" style="left:874px;top:607px;font-size:11.3px">Mapeo</div>
<!-- value cells -->
<div class="a" style="left:968px;top:442px;width:98px;height:19px;background:#fff"></div>
<div class="a" style="left:968px;top:498px;width:98px;height:19px;background:#fff"></div>
<div class="a" style="left:968px;top:518px;width:98px;height:19px;background:#fff"></div>
<div class="a" style="left:968px;top:538px;width:98px;height:19px;background:#fff"></div>
<div class="a" style="left:968px;top:558px;width:98px;height:19px;background:#fff"></div>
<div class="a" style="left:968px;top:578px;width:98px;height:19px;background:#fff"></div>
<div class="a" style="left:968px;top:626px;width:98px;height:19px;background:#fff"></div>
<div class="a" style="left:968px;top:646px;width:98px;height:19px;background:#fff"></div>
<div class="a" style="left:967.5px;top:665.5px;width:99px;height:20px;background:#fff;border:1px solid #7a7a7a"></div>
<div class="a" style="left:967.5px;top:685.5px;width:99px;height:10px;background:#fff;border:1px solid #7a7a7a;border-bottom:none"></div>
<svg class="a" style="left:860px;top:415px" width="232" height="282" viewBox="860 415 232 282" fill="none">
 <g stroke="#7a7a7a" stroke-width="1.2">
  <path d="M878 461.3 H1067 M878 517.3 H1067 M878 537.3 H1067 M878 557.3 H1067 M878 577.3 H1067 M878 597.3 H1067 M878 645.3 H1067 M878 665.3 H1067 M878 685.5 H967"/>
 </g>
 <g>
  <circle cx="1055.7" cy="429.5" r="8" fill="#fff" stroke="#9a9a9a" stroke-width="1"/>
  <path d="M1052.5 429 L1055.7 426 L1058.9 429 M1052.5 433 L1055.7 430 L1058.9 433" stroke="#1a2a5a" stroke-width="1.3"/>
  <circle cx="1055.7" cy="485.5" r="8" fill="#fff" stroke="#9a9a9a" stroke-width="1"/>
  <path d="M1052.5 485 L1055.7 482 L1058.9 485 M1052.5 489 L1055.7 486 L1058.9 489" stroke="#1a2a5a" stroke-width="1.3"/>
  <circle cx="1055.7" cy="613.5" r="8" fill="#fff" stroke="#9a9a9a" stroke-width="1"/>
  <path d="M1052.5 613 L1055.7 610 L1058.9 613 M1052.5 617 L1055.7 614 L1058.9 617" stroke="#1a2a5a" stroke-width="1.3"/>
 </g>
 <g fill="#fff" stroke="#b0b0b0" stroke-width="1">
  <rect x="1050.5" y="443.5" width="15" height="15.5" rx="3"/>
  <rect x="1050.5" y="499.5" width="15" height="15.5" rx="3"/>
  <rect x="1050.5" y="539.5" width="15" height="15.5" rx="3"/>
  <rect x="1050.5" y="559.5" width="15" height="15.5" rx="3"/>
  <rect x="1050.5" y="579.5" width="15" height="15.5" rx="3"/>
 </g>
 <g fill="#1a2a5a"><text x="1053" y="456" font-size="10" font-family="Liberation Sans">...</text><text x="1053" y="512" font-size="10" font-family="Liberation Sans">...</text><text x="1053" y="552" font-size="10" font-family="Liberation Sans">...</text><text x="1053" y="572" font-size="10" font-family="Liberation Sans">...</text><text x="1053" y="592" font-size="10" font-family="Liberation Sans">...</text></g>
 <rect x="971.5" y="501.5" width="19" height="12.5" fill="#000" stroke="#444" stroke-width="1"/>
 <rect x="971.5" y="541.5" width="16" height="12.5" fill="#f8f8f8" stroke="#555" stroke-width="1"/>
 <rect x="971.5" y="561.5" width="16" height="12.5" fill="#f8f8f8" stroke="#555" stroke-width="1"/>
 <path d="M1052 673.5 L1057 678 L1062 673.5" stroke="#555" stroke-width="1"/>
 <path d="M1052 693 L1057 697.5 L1062 693" stroke="#555" stroke-width="1"/>
</svg>
<div class="a" style="left:859px;top:695.5px;width:217px;height:30px;background:#f0f0f0"></div>
<div class="a pg" style="left:884px;top:446px">Componente</div>
<div class="a pg" style="left:971px;top:446px;font-size:11.6px;letter-spacing:-0.7px;width:79px;overflow:hidden">DEC_FRAME_H</div>
<div class="a pg" style="left:884px;top:502px">Color del Borde</div>
<div class="a pg" style="left:993px;top:502px;font-size:11.6px">0; 0; 0</div>
<div class="a pg" style="left:884px;top:522px">Espesura del ...</div>
<div class="a pg" style="left:971px;top:522px;font-size:11.6px">0</div>
<div class="a pg" style="left:884px;top:542px">Color Base</div>
<div class="a pg" style="left:990px;top:542px;font-size:11.6px;width:60px;overflow:hidden">250; 250; 250</div>
<div class="a pg" style="left:884px;top:562px">Colores Compl...</div>
<div class="a pg" style="left:990px;top:562px;font-size:11.6px;width:60px;overflow:hidden">250; 250; 250</div>
<div class="a pg" style="left:884px;top:582px">Textura</div>
<div class="a pg" style="left:884px;top:630px">Escalar en X</div>
<div class="a pg" style="left:971px;top:630px;font-size:11.6px">0</div>
<div class="a pg" style="left:884px;top:650px">Escalar en Y</div>
<div class="a pg" style="left:971px;top:650px;font-size:11.6px">0</div>
<div class="a pg" style="left:884px;top:670px">Espejear</div>
<div class="a pg" style="left:971px;top:669px;font-size:11.6px">No</div>
<div class="a" style="left:860px;top:685.5px;width:216px;height:10px;overflow:hidden"><div class="a pg" style="left:24px;top:4px">Espejear Y</div><div class="a pg" style="left:111px;top:3px;font-size:11.6px">No</div></div>
<div class="a" style="left:859px;top:695.5px;width:217px;height:30px;background:#f0f0f0"></div>
<div class="a" style="left:863.5px;top:726.5px;width:224px;height:18px;background:linear-gradient(#fdfdfd,#f7f7f7);border:1px solid #c4c4c4;border-radius:3px"></div>
<div class="a pg" style="left:895px;top:729px;font-size:11.3px;letter-spacing:-0.38px">Aplicar en todos los Componentes</div>


<!-- bottom bars -->
<div class="a" style="left:31px;top:733px;width:806px;height:4px;background:#f0f0f0"></div>
<div class="a" style="left:29px;top:737px;width:808px;height:24px;background:#fafafa;border-top:1px solid #ececec"></div>
<div class="a" style="left:269px;top:738px;width:463px;height:22px;background:#fff"></div>
<div class="a" style="left:7px;top:761px;width:832px;height:1px;background:#8f8f8f"></div>
<svg class="a" style="left:0;top:730px" width="860" height="40" viewBox="0 730 860 40" fill="none">
 <!-- connect rss -->
 <circle cx="37.5" cy="754" r="2" fill="#1f6fd0"/>
 <path d="M36 747.5 A7 7 0 0 1 44 755 M36 743 A11.5 11.5 0 0 1 48.3 755" stroke="#1f6fd0" stroke-width="2.2"/>
 <!-- globe -->
 <circle cx="117.8" cy="749.8" r="6.6" fill="#6eb4ee" stroke="#4a94d8" stroke-width="0.8"/>
 <path d="M111.5 749.8 H124 M117.8 743.3 V756.3 M113 745.5 H122.5 M113 754 H122.5" stroke="#d8ecfb" stroke-width="0.8"/>
 <ellipse cx="117.8" cy="749.8" rx="3" ry="6.5" stroke="#d8ecfb" stroke-width="0.8"/>
 <!-- project box -->
 <rect x="199.5" y="739.5" width="63" height="20" stroke="#1a7fe0" stroke-width="1" fill="#fff"/>
 <path d="M202.5 745 H207.5 L209 746.5 H215 V755.5 H202.5 Z" fill="#f7dc8c" stroke="#b8953a" stroke-width="0.8"/>
 <path d="M204 748.5 H216.5 L214.5 755.5 H202.5 Z" fill="#fbe9ae" stroke="#b8953a" stroke-width="0.8"/>
 <!-- grip -->
 <g fill="#8a8a8a"><rect x="749" y="748" width="2" height="2"/><rect x="745" y="752" width="2" height="2"/><rect x="749" y="752" width="2" height="2"/><rect x="741" y="756" width="2" height="2"/><rect x="745" y="756" width="2" height="2"/><rect x="749" y="756" width="2" height="2"/></g>
 <!-- sala -->
 <rect x="759.5" y="739.5" width="47" height="20" stroke="#1a7fe0" stroke-width="1" fill="#fff"/>
 <path d="M764 743 H771 L774 746 V756 H764 Z" fill="#fff" stroke="#6a8fc8" stroke-width="0.8"/>
 <path d="M766 751 L770.5 748.5 L776 751 V755 L770.5 757.5 L766 755 Z" fill="#a8a8a8" stroke="#555" stroke-width="0.7"/>
 <path d="M820 746.3 L827.5 753.3 M827.5 746.3 L820 753.3" stroke="#8a8a8a" stroke-width="1.8"/>
</svg>
<div class="a" style="left:53px;top:742px;font-size:12.4px;color:#111">Connect</div>
<div class="a" style="left:129px;top:742px;font-size:12.4px;color:#111">Conexión P</div>
<div class="a" style="left:220px;top:742px;font-size:12.4px;color:#111">Project</div>
<div class="a" style="left:272px;top:743px;font-size:11.9px;color:#111">Selecione um item para aplicar o material copiado</div>
<div class="a" style="left:780px;top:742px;font-size:12px;letter-spacing:-0.4px;color:#111">Sala</div>
<!-- status bar -->
<div class="a" style="left:7px;top:762px;width:1101px;height:23px;background:#f5f5f5;border-top:1px solid #fff;border-radius:0 0 7px 7px"></div>
<div class="a" style="left:11px;top:767px;font-size:11.9px;color:#111">Selecione um item para aplicar o material copiado</div>
<svg class="a" style="left:690px;top:760px" width="426" height="28" viewBox="690 760 426 28" fill="none">
 <circle cx="709.6" cy="775" r="3.3" stroke="#111" stroke-width="1.5" fill="none"/><circle cx="716.5" cy="773.6" r="3" stroke="#111" stroke-width="1.5" fill="none"/><path d="M704.5 770.5 Q707 771 707.5 773 M712.8 774 L713.6 773.6" stroke="#111" stroke-width="1.4" fill="none"/>
 <path d="M770 772 H775 L772.5 774.8 Z" fill="#222"/>
 <rect x="784.5" y="763.5" width="69" height="19" stroke="#1a7fe0" stroke-width="1"/>
 <rect x="786.5" y="766" width="3.5" height="15" fill="#fff" stroke="#666" stroke-width="0.8"/>
 <rect x="790" y="768" width="7.5" height="13" fill="#a47f5c" stroke="#5a4030" stroke-width="0.8"/>
 <path d="M797.5 771 H801 M797.5 774 H801 M797.5 777 H801" stroke="#5a4030" stroke-width="1"/>
 <rect x="859.5" y="763.5" width="106.5" height="19" stroke="#1a7fe0" stroke-width="1"/>
 <rect x="861" y="765" width="16" height="16" fill="#9c7a58"/>
 <path d="M861 770 H877 M861 775.5 H877 M866 765 V770 M872 770 V775.5 M866 775.5 V781" stroke="#e0cdb8" stroke-width="0.8"/>
 <path d="M869 768 V778 M864 773 H874" stroke="#ee1111" stroke-width="3"/>
 <path d="M976 777 H988 V780.5 H976 Z" fill="#f0d79a" stroke="#b49548" stroke-width="0.8"/>
 <path d="M982 766 V774 M979.5 771.5 L982 775 L984.5 771.5" stroke="#e02020" stroke-width="1.5"/>
 <path d="M1075 767 Q1079 764 1082 767 L1080 770 L1088 779 Q1090 782 1087 782 L1079 772 L1076 773 Z" fill="#e8b040" stroke="#9a9a9a" stroke-width="0.8"/>
 <path d="M1074.5 767.5 Q1077 763.5 1082 766" stroke="#bbb" stroke-width="2"/>
 <g fill="#8a8a8a"><rect x="1103" y="772" width="2" height="2"/><rect x="1099" y="776" width="2" height="2"/><rect x="1103" y="776" width="2" height="2"/><rect x="1095" y="780" width="2" height="2"/><rect x="1099" y="780" width="2" height="2"/><rect x="1103" y="780" width="2" height="2"/></g>
</svg>
<div class="a" style="left:723px;top:766px;font-size:12.4px;color:#111">Mostrar</div>
<div class="a" style="left:805px;top:766px;font-size:12.4px;color:#111">Colisión</div>
<div class="a" style="left:880px;top:766px;font-size:12.4px;color:#111">Acoplamientos</div>
<div class="a" style="left:992px;top:766px;font-size:12.4px;color:#111">Auto Rebajar</div>

</body></html>
